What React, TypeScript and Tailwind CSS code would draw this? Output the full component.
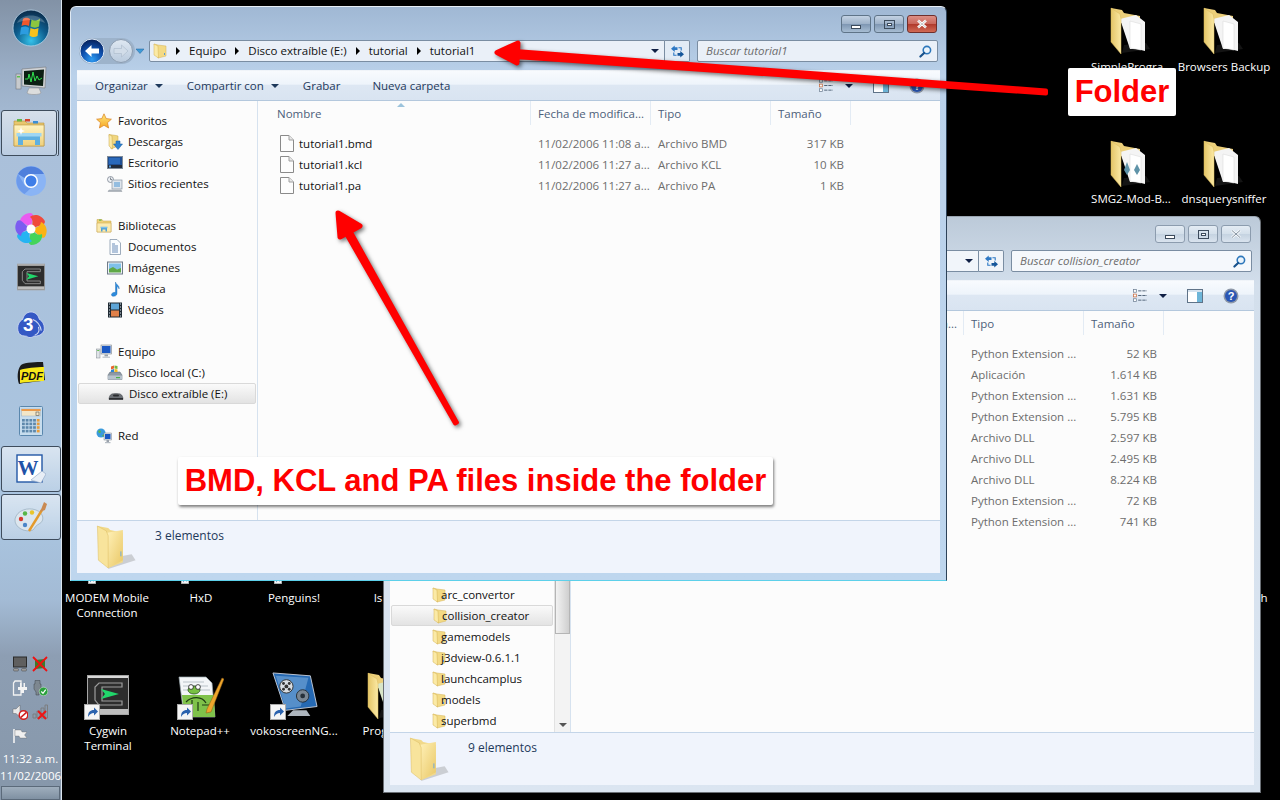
import React from "react";

type IconProps = { className?: string };

/* ---------- folders ---------- */
function BigFolder({ sheet = "#f4f4f4", detail = false, className = "" }: { sheet?: string; detail?: boolean; className?: string }) {
  return (
    <svg viewBox="0 0 40 48" className={className}>
      <defs>
        <linearGradient id="flap" x1="0" y1="0" x2="1" y2="0">
          <stop offset="0" stopColor="#e4c567" />
          <stop offset="1" stopColor="#fbe9a4" />
        </linearGradient>
      </defs>
      <path d="M12 46 L40 42 L36 36 L14 38 Z" fill="#3a3a3a" opacity="0.35" />
      <path d="M1 1 L12 3 L14 6 L30 9 L30 16 L1 16 Z" fill="#eccf7a" />
      <path d="M10 12 L26 8 L35 15 L35 44 L27 42 L20 42 Z" fill={sheet} />
      <path d="M20 14 L31 17 L31 43 L20 41 Z" fill={sheet === "#f4f4f4" ? "#ffffff" : sheet} stroke="#d7d7d7" strokeWidth="0.5" />
      {detail && (
        <g>
          <path d="M14 30 l3 -8 l3 8 l-3 5 Z" fill="#5f93a8" />
          <path d="M24 30 l3 -6 l3 6 l-3 5 Z" fill="#5f93a8" />
        </g>
      )}
      <path d="M1 1 L10 7 L11 12 L11 47 L1 35 Z" fill="url(#flap)" stroke="#d8b858" strokeWidth="0.5" />
    </svg>
  );
}

function PlainFolder({ className = "" }: IconProps) {
  return (
    <svg viewBox="0 0 40 46" className={className}>
      <defs>
        <linearGradient id="pf" x1="0" y1="0" x2="1" y2="1">
          <stop offset="0" stopColor="#fff1b8" />
          <stop offset="1" stopColor="#e9c765" />
        </linearGradient>
      </defs>
      <path d="M12 45 L40 36 L36 30 L14 34 Z" fill="#888" opacity="0.35" />
      <path d="M1 1 L12 3 L14 5 L27 8 L27 38 L12 44 Z" fill="#f1d98a" />
      <path d="M11 8 L27 5 L27 36 L12 44 Z" fill="url(#pf)" />
      <path d="M1 1 L10 6 L12 11 L12 44 L2 36 Z" fill="#f8e49c" stroke="#dcbc5f" strokeWidth="0.5" />
      <path d="M25 27 v5" stroke="#6ea8d8" strokeWidth="1" />
    </svg>
  );
}

function SmallFolder({ className = "" }: IconProps) {
  return (
    <svg viewBox="0 0 14 16" className={className}>
      <path d="M1 1 L5 2 L13 3 L13 13 L5 15 Z" fill="#f3da85" stroke="#d5b354" strokeWidth="0.5" />
      <path d="M1 1 L5 3 L5.5 15 L1 12 Z" fill="#fbeaa6" stroke="#d5b354" strokeWidth="0.5" />
      <path d="M11.5 10 v2" stroke="#5b9bd5" strokeWidth="1" />
    </svg>
  );
}

/* ---------- navigation pane icons ---------- */
function Star({ className = "" }: IconProps) {
  return (
    <svg viewBox="0 0 16 16" className={className}>
      <defs>
        <linearGradient id="st" x1="0" y1="0" x2="0" y2="1">
          <stop offset="0" stopColor="#ffe97f" />
          <stop offset="1" stopColor="#f6a623" />
        </linearGradient>
      </defs>
      <path d="M8 0.8 L10.2 5.6 L15.4 6.2 L11.5 9.7 L12.6 15 L8 12.3 L3.4 15 L4.5 9.7 L0.6 6.2 L5.8 5.6 Z" fill="url(#st)" stroke="#d97f20" strokeWidth="0.7" />
    </svg>
  );
}
function Downloads({ className = "" }: IconProps) {
  return (
    <svg viewBox="0 0 16 16" className={className}>
      <path d="M2 0.5 L9 1.5 L11 2 L11 12 L4 15 Z" fill="#f0d67f" stroke="#c9a648" strokeWidth="0.5" />
      <path d="M2 0.5 L5 2 L5.5 15 L2 12 Z" fill="#fbeaa6" stroke="#c9a648" strokeWidth="0.5" />
      <path d="M9 7 h4 v3 h2.5 L11 15.5 L6.5 10 H9 Z" fill="#2f82d0" stroke="#175a9d" strokeWidth="0.5" />
    </svg>
  );
}
function Desk({ className = "" }: IconProps) {
  return (
    <svg viewBox="0 0 16 16" className={className}>
      <rect x="0.5" y="1.5" width="15" height="12" fill="#1f4f94" stroke="#7f8b99" />
      <rect x="1" y="10" width="14" height="3" fill="#222c3c" />
      <rect x="2" y="3" width="11" height="6" fill="#2a69bb" />
      <rect x="2" y="10.5" width="2" height="2" fill="#5aa0e0" />
    </svg>
  );
}
function Recent({ className = "" }: IconProps) {
  return (
    <svg viewBox="0 0 16 16" className={className}>
      <circle cx="3.5" cy="3.5" r="3" fill="#eef1f5" stroke="#6d7785" strokeWidth="0.7" />
      <path d="M3.5 1.5 v2 h1.5" stroke="#3d4652" strokeWidth="0.6" fill="none" />
      <rect x="5" y="4" width="10" height="9" fill="#dfe5ec" stroke="#8b96a3" strokeWidth="0.7" />
      <rect x="7" y="6" width="6" height="5" fill="#94bde0" />
      <path d="M2 14 h12 l1 1.5 H1 Z" fill="#b5bbc3" stroke="#7b838e" strokeWidth="0.4" />
    </svg>
  );
}
function Library({ className = "" }: IconProps) {
  return (
    <svg viewBox="0 0 16 16" className={className}>
      <path d="M1 3 L1 1.5 H6 L7 3 H15 V14 H1 Z" fill="#efd27a" stroke="#c5a347" strokeWidth="0.5" />
      <path d="M1 5 H15 V14 H1 Z" fill="#fbeab0" stroke="#c5a347" strokeWidth="0.5" />
      <rect x="3" y="1.5" width="2.5" height="1.2" fill="#68b446" />
      <path d="M5 13.5 V10 H11 V13.5 H9.5 V11.5 H6.5 V13.5 Z" fill="#4f9fd6" />
      <rect x="4.5" y="8.7" width="7" height="1.5" fill="#7cc0e9" />
    </svg>
  );
}
function Doc({ className = "" }: IconProps) {
  return (
    <svg viewBox="0 0 16 16" className={className}>
      <path d="M3 0.5 H10 L13.5 4 V15.5 H3 Z" fill="#fbfdff" stroke="#8597ab" strokeWidth="0.8" />
      <path d="M5 5 H8 M5 7 H11 M5 9 H11 M5 11 H11 M5 13 H11" stroke="#5a7fb0" strokeWidth="0.9" />
    </svg>
  );
}
function Pics({ className = "" }: IconProps) {
  return (
    <svg viewBox="0 0 16 16" className={className}>
      <rect x="0.5" y="2" width="15" height="12" fill="#eef2f6" stroke="#6e7a88" />
      <rect x="2" y="3.5" width="12" height="6" fill="#7fc0ea" />
      <path d="M2 12.5 V9 L6 7 L10 9.5 L14 8 V12.5 Z" fill="#5fa847" />
    </svg>
  );
}
function Music({ className = "" }: IconProps) {
  return (
    <svg viewBox="0 0 16 16" className={className}>
      <path d="M8.5 1 C9 4 13 4.5 12 8 C12 6.5 10.5 5.8 10 5.6 L10 12.5 C10 14.5 7.6 15.7 5.7 15.2 C4 14.7 4.1 12.8 5.6 11.9 C6.6 11.3 7.8 11.2 8.5 11.5 Z" fill="#2d8bdd" stroke="#1a66ad" strokeWidth="0.4" />
    </svg>
  );
}
function Film({ className = "" }: IconProps) {
  return (
    <svg viewBox="0 0 16 16" className={className}>
      <rect x="1" y="0.5" width="14" height="15" fill="#1f2a33" />
      <rect x="4" y="1.5" width="8" height="6" fill="#5ea5d6" />
      <rect x="4" y="8.5" width="8" height="6" fill="#e1814a" />
      <path d="M2 2 H3 M2 5 H3 M2 8 H3 M2 11 H3 M2 14 H3 M13 2 H14 M13 5 H14 M13 8 H14 M13 11 H14 M13 14 H14" stroke="#d7e4ee" strokeWidth="1.2" />
    </svg>
  );
}
function Computer({ className = "" }: IconProps) {
  return (
    <svg viewBox="0 0 16 16" className={className}>
      <rect x="0.5" y="5" width="3.5" height="9" fill="#dfe3e7" stroke="#7f8790" strokeWidth="0.5" />
      <rect x="1.2" y="6" width="2" height="1" fill="#5cc04e" />
      <rect x="5" y="1" width="10.5" height="9" fill="#dde2e7" stroke="#7a828c" strokeWidth="0.6" />
      <rect x="6" y="2" width="8.5" height="7" fill="#1a58c4" />
      <rect x="8.5" y="10.5" width="3.5" height="2" fill="#9aa2ac" />
      <rect x="6.5" y="12.5" width="7.5" height="1.5" fill="#c6ccd2" />
    </svg>
  );
}
function DiskC({ className = "" }: IconProps) {
  return (
    <svg viewBox="0 0 16 16" className={className}>
      <path d="M1 10 L3 7 H13 L15 10 V14.5 H1 Z" fill="#8d99a5" stroke="#5a6570" strokeWidth="0.5" />
      <rect x="1" y="10.5" width="14" height="4" fill="#b7c2cc" />
      <rect x="9" y="12" width="4" height="1.2" fill="#4db24b" />
      <path d="M4 1.5 l3 -1 v3 l-3 1 Z" fill="#e9642f" />
      <path d="M7.5 0.5 l3 .5 v3 l-3 -.5 Z" fill="#76b83f" />
      <path d="M4 5 l3 -1 v3 h-3 Z" fill="#2c86d4" />
      <path d="M7.5 4 l3 .5 v2.5 h-3 Z" fill="#f3b81f" />
    </svg>
  );
}
function DiskE({ className = "" }: IconProps) {
  return (
    <svg viewBox="0 0 16 16" className={className}>
      <path d="M1 12 C2 8 4 7.5 8 7.5 C12 7.5 14 8 15 12 V13.5 H1 Z" fill="#6b6f74" stroke="#35383c" strokeWidth="0.4" />
      <rect x="5" y="8.5" width="6" height="2" rx="1" fill="#2a2c2f" />
      <rect x="1" y="12" width="14" height="1.6" fill="#2c2e31" />
    </svg>
  );
}
function Net({ className = "" }: IconProps) {
  return (
    <svg viewBox="0 0 16 16" className={className}>
      <circle cx="5" cy="5" r="4.5" fill="#3a9bdc" />
      <path d="M2 3 C4 1 5 3 5 4 C4 6 2.5 5 2 3 Z M6 8 C7 6 8 7 8.5 6.5 C8 8.5 7 9 6 8 Z" fill="#5db64a" />
      <rect x="8" y="5" width="7.5" height="7" fill="#dde2e7" stroke="#7a828c" strokeWidth="0.5" />
      <rect x="9" y="6" width="5.5" height="5" fill="#1a58c4" />
      <rect x="10.5" y="12" width="2.5" height="2" fill="#9aa2ac" />
      <rect x="9" y="14" width="5.5" height="1.2" fill="#b5bcc4" />
    </svg>
  );
}
function FileIcon({ className = "" }: IconProps) {
  return (
    <svg viewBox="0 0 14 17" className={className}>
      <path d="M0.5 0.5 H9 L13.5 5 V16.5 H0.5 Z" fill="#fdfdfd" stroke="#8a8a8a" />
      <path d="M9 0.5 V5 H13.5" fill="#e8e8e8" stroke="#a0a0a0" />
    </svg>
  );
}

/* ---------- window chrome icons ---------- */
function Magnifier({ className = "" }: IconProps) {
  return (
    <svg viewBox="0 0 14 14" className={className}>
      <circle cx="8.5" cy="5.5" r="4" fill="#eaf3fb" stroke="#2d77bb" strokeWidth="1.7" />
      <path d="M5.5 8.5 L1.5 12.5" stroke="#18528c" strokeWidth="2.3" strokeLinecap="round" />
    </svg>
  );
}
function Refresh({ className = "" }: IconProps) {
  return (
    <svg viewBox="0 0 16 14" className={className}>
      <path d="M1 4 L5 0.5 V2.5 H8 V5.5 H5 V7.5 Z" fill="#2d78c4" />
      <path d="M15 10 L11 13.5 V11.5 H8 V8.5 H11 V6.5 Z" fill="#15569a" />
      <path d="M9 3 L12 3 L12 6" stroke="#2d78c4" strokeWidth="1.2" fill="none" />
      <path d="M7 11 L4 11 L4 8" stroke="#2d78c4" strokeWidth="1.2" fill="none" />
    </svg>
  );
}
function ViewIcon({ className = "" }: IconProps) {
  return (
    <svg viewBox="0 0 16 14" className={className}>
      <rect x="0.5" y="0.5" width="3" height="3" fill="#fff" stroke="#6d7f93" strokeWidth="0.8" />
      <rect x="0.5" y="5.5" width="3" height="3" fill="#fff" stroke="#c96b3d" strokeWidth="0.8" />
      <rect x="0.5" y="10.5" width="3" height="3" fill="#fff" stroke="#6d7f93" strokeWidth="0.8" />
      <path d="M5.5 2 H15 M5.5 7 H15 M5.5 12 H15" stroke="#4b5d73" strokeWidth="1" strokeDasharray="3.5 1" />
    </svg>
  );
}
function PaneIcon({ className = "" }: IconProps) {
  return (
    <svg viewBox="0 0 16 14" className={className}>
      <rect x="0.5" y="0.5" width="15" height="13" fill="#fff" stroke="#5f7388" />
      <rect x="10" y="1" width="5" height="12" fill="#6db5d8" />
      <rect x="1" y="1" width="14" height="2" fill="#d6e3ef" />
    </svg>
  );
}
function HelpIcon({ className = "" }: IconProps) {
  return (
    <svg viewBox="0 0 16 16" className={className}>
      <circle cx="8" cy="8" r="7.5" fill="#8e98a8" />
      <circle cx="8" cy="8" r="6" fill="#2a56b4" />
      <text x="8" y="12" textAnchor="middle" fontSize="11" fontWeight="700" fill="#fff" fontFamily="Liberation Sans">?</text>
    </svg>
  );
}
function NavButtons() {
  return (
    <svg viewBox="0 0 71 30" className="w-[71px] h-[30px] shrink-0">
      <defs>
        <radialGradient id="bk" cx="0.5" cy="0.85" r="0.8">
          <stop offset="0" stopColor="#2f9cf2" />
          <stop offset="0.55" stopColor="#0d4fae" />
          <stop offset="1" stopColor="#07235f" />
        </radialGradient>
        <linearGradient id="fw" x1="0" y1="0" x2="0" y2="1">
          <stop offset="0" stopColor="#dfe8f2" />
          <stop offset="1" stopColor="#b9cadd" />
        </linearGradient>
      </defs>
      <rect x="2" y="2" width="56" height="26" rx="13" fill="#9db3cb" />
      <circle cx="15" cy="15" r="12" fill="url(#bk)" stroke="#dbe7f4" strokeWidth="1" />
      <path d="M8 15 L14.5 9 V12.5 H22 V17.5 H14.5 V21 Z" fill="#fff" />
      <circle cx="44" cy="15" r="11.5" fill="url(#fw)" stroke="#8b9cb0" strokeWidth="1" />
      <path d="M51 15 L44.5 9 V12.5 H37 V17.5 H44.5 V21 Z" fill="#d2dde9" stroke="#a9b8c9" strokeWidth="0.6" />
      <path d="M59 13 H67 L63 17.5 Z" fill="#3d9bd8" stroke="#1f5f9b" strokeWidth="0.5" />
    </svg>
  );
}

function Tri({ className = "" }: IconProps) {
  return <span className={"w-0 h-0 border-y-[4px] border-y-transparent border-l-[4px] border-l-black " + className} />;
}
function Down({ className = "" }: IconProps) {
  return <span className={"w-0 h-0 border-x-[4px] border-x-transparent border-t-[4px] border-t-[#1e395b] " + className} />;
}

function Controls({ active }: { active: boolean }) {
  const base = "w-[30px] h-[18px] rounded-[3px] border flex items-center justify-center ";
  const plain = active
    ? "border-[#5f7488] bg-[linear-gradient(180deg,#c3d2e3_0%,#9db1c8_50%,#7f97b3_52%,#a7bdd3_100%)]"
    : "border-[#8c9cae] bg-[linear-gradient(180deg,#e4ecf4_0%,#d3dfea_50%,#c5d3e1_52%,#d9e3ee_100%)]";
  const close = active
    ? "border-[#6f2f2c] bg-[linear-gradient(180deg,#dd8f86_0%,#c9665a_50%,#b03a2c_52%,#d16a55_100%)]"
    : plain;
  return (
    <div className="flex gap-[3px]">
      <div className={base + plain}>
        <span className="w-[10px] h-[4px] mt-[5px] border border-[#3c4b5c] bg-white" />
      </div>
      <div className={base + plain}>
        <span className="w-[11px] h-[9px] border border-[#3c4b5c] bg-transparent flex items-center justify-center">
          <span className="w-[5px] h-[3px] border border-[#3c4b5c] bg-white" />
        </span>
      </div>
      <div className={base + close}>
        <svg viewBox="0 0 12 10" className="w-[12px] h-[10px]">
          <path d="M2 1.5 L10 8.5 M10 1.5 L2 8.5" stroke={active ? "#fff" : "#f4f7fa"} strokeWidth="2.6" />
          {!active && <path d="M2 1.5 L10 8.5 M10 1.5 L2 8.5" stroke="#6b7b8c" strokeWidth="0.8" />}
          {active && <path d="M2 1.5 L10 8.5 M10 1.5 L2 8.5" stroke="#7a7a7a" strokeWidth="0.4" />}
        </svg>
      </div>
    </div>
  );
}

/* ---------- explorer window ---------- */
type Col = { tipo: string; size: string; name?: string; date?: string };

function Explorer({
  active,
  pos,
  search,
  address,
  left,
  files,
  count,
}: {
  active: boolean;
  pos: string;
  search: string;
  address: React.ReactNode;
  left: React.ReactNode;
  files: Col[];
  count: string;
}) {
  return (
    <div
      className={
        "absolute flex flex-col rounded-t-[6px] border " +
        pos +
        (active
          ? " border-[#2d4258] border-t-[#e8eff7] border-l-[#dfe9f3] border-b-[#5dd0ea] bg-[linear-gradient(180deg,#a0b8d4_0%,#bad1ea_12%,#bed6ee_100%)]"
          : " border-[#6a6f75] border-t-[#9aa5b1] bg-[linear-gradient(180deg,#bccad9_0%,#d3dfec_12%,#dbe5f1_100%)]")
      }
    >
      <div className="h-[63px] flex flex-col pl-[7px] pr-[8px]">
        <div className="flex justify-end pt-[8px] pr-[1px] h-[33px]">
          <Controls active={active} />
        </div>
        <div className="flex items-center h-[22px]">
          <div className="-ml-[1px] w-[72px] flex"><NavButtons /></div>
          <div className={"flex-1 h-[22px] flex items-center rounded-[2px] border border-[#7a8da2] " + (active ? "bg-[#eaf0f8]" : "bg-[#f1f5fa]")}>
            <div className="flex-1 flex items-center">{address}</div>
            <Down className="mr-[4px] !border-t-[#0f1f44]" />
            <span className="w-[1px] h-[20px] bg-[#7a8da2] ml-[1px]" />
          </div>
          <div className={"w-[25px] h-[22px] -ml-[1px] flex items-center justify-center rounded-r-[2px] border border-l-0 border-[#7a8da2] " + (active ? "bg-[#e2ebf5]" : "bg-[#f0f4f9]")}>
            <Refresh className="w-[15px] h-[13px]" />
          </div>
          <div className={"ml-[7px] w-[241px] h-[22px] flex items-center rounded-[2px] border border-[#7a8da2] pl-[8px] pr-[5px] " + (active ? "bg-[#eaf0f8]" : "bg-[#f5f8fc]")}>
            <span className="flex-1 italic text-[#6d6d6d] text-[11.5px]">{search}</span>
            <Magnifier className="w-[13px] h-[13px]" />
          </div>
        </div>
      </div>

      <div className="flex-1 mx-[6px] mb-[7px] flex flex-col min-h-0">
        {/* toolbar */}
        <div className="h-[31px] shrink-0 flex items-center text-[#1e395b] border-b border-[#b4c8dd] border-t border-t-[#fff]/60 bg-[linear-gradient(180deg,#f8fbfe_0%,#eef4fb_45%,#dde7f3_50%,#d9e4f1_100%)] pr-[15px]">
          <span className="ml-[18px]">Organizar</span>
          <Down className="ml-[7px]" />
          <span className="ml-[24px]">Compartir con</span>
          <Down className="ml-[7px]" />
          <span className="ml-[24px]">Grabar</span>
          <span className="ml-[32px]">Nueva carpeta</span>
          <div className="ml-auto flex items-center">
            <ViewIcon className="w-[15px] h-[13px]" />
            <Down className="ml-[11px] !border-t-[#0f1f44]" />
            <PaneIcon className="ml-[20px] w-[16px] h-[14px]" />
            <HelpIcon className="ml-[20px] w-[16px] h-[16px]" />
          </div>
        </div>

        {/* body */}
        <div className="flex-1 flex min-h-0 bg-[#fcfcfc]">
          <div className="w-[181px] shrink-0 border-r border-[#d6e2ef] flex flex-col overflow-hidden">{left}</div>
          <div className="flex-1 flex flex-col min-w-0">
            <div className="relative h-[24px] flex text-[#4c607a] shrink-0 pl-[1px]">
              {active && <span className="absolute left-[139px] top-[2px] w-0 h-0 border-x-[4px] border-x-transparent border-b-[4px] border-b-[#9cc3dc]" />}
              <HeaderCell w="w-[272px]" pl="pl-[18px]">Nombre</HeaderCell>
              <HeaderCell w="w-[120px]" pl="pl-[7px]">Fecha de modifica...</HeaderCell>
              <HeaderCell w="w-[120px]" pl="pl-[7px]">Tipo</HeaderCell>
              <HeaderCell w="w-[80px]" pl="pl-[7px]">Tamaño</HeaderCell>
            </div>
            <div className="pt-[8px] flex flex-col pl-[1px]">
              {files.map((f, i) => (
                <div key={i} className="h-[21px] flex items-center">
                  <div className="w-[272px] flex items-center pl-[21px]">
                    {f.name && <FileIcon className="w-[14px] h-[17px]" />}
                    <span className="ml-[5px] text-[#111]">{f.name}</span>
                  </div>
                  <div className="w-[120px] pl-[7px] text-[#6d6d6d] whitespace-nowrap">{f.date}</div>
                  <div className="w-[120px] pl-[7px] text-[#6d6d6d] whitespace-nowrap">{f.tipo}</div>
                  <div className="w-[73px] text-right text-[#6d6d6d]">{f.size}</div>
                </div>
              ))}
            </div>
          </div>
        </div>

        {/* status */}
        <div className="h-[53px] shrink-0 border-t border-[#c4d5e8] bg-[#f0f4fc] flex text-[#1e395b]">
          <PlainFolder className="ml-[19px] mt-[4px] w-[40px] h-[45px]" />
          <span className="ml-[19px] mt-[6px] text-[12px]">{count}</span>
        </div>
      </div>
    </div>
  );
}

function HeaderCell({ w, pl, children }: { w: string; pl: string; children: React.ReactNode }) {
  return (
    <div className={w + " " + pl + " h-full flex items-center border-r border-[#e3ebf4] whitespace-nowrap"}>
      <span className="mt-[1px]">{children}</span>
    </div>
  );
}

function NavRow({ icon, label, top, sel, gapTop = "" }: { icon: React.ReactNode; label: string; top?: boolean; sel?: boolean; gapTop?: string }) {
  return (
    <div
      className={
        "h-[21px] flex items-center text-[#111] whitespace-nowrap " +
        gapTop +
        (sel ? " mx-[1px] rounded-[2px] border border-[#d9d9d9] bg-[linear-gradient(180deg,#fafafa_0%,#e3e3e3_100%)]" : "")
      }
    >
      <span className={top ? "ml-[19px] w-[22px]" : sel ? "ml-[29px] w-[21px]" : "ml-[30px] w-[21px]"}>{icon}</span>
      <span>{label}</span>
    </div>
  );
}

const I16 = "w-[16px] h-[16px] block";

function MainNav() {
  return (
    <div className="pt-[9px] flex flex-col">
      <NavRow top icon={<Star className={I16} />} label="Favoritos" />
      <NavRow icon={<Downloads className={I16} />} label="Descargas" />
      <NavRow icon={<Desk className={I16} />} label="Escritorio" />
      <NavRow icon={<Recent className={I16} />} label="Sitios recientes" />
      <NavRow top gapTop="mt-[21px]" icon={<Library className={I16} />} label="Bibliotecas" />
      <NavRow icon={<Doc className={I16} />} label="Documentos" />
      <NavRow icon={<Pics className={I16} />} label="Imágenes" />
      <NavRow icon={<Music className={I16} />} label="Música" />
      <NavRow icon={<Film className={I16} />} label="Vídeos" />
      <NavRow top gapTop="mt-[21px]" icon={<Computer className={I16} />} label="Equipo" />
      <NavRow icon={<DiskC className={I16} />} label="Disco local (C:)" />
      <NavRow sel icon={<DiskE className={I16} />} label="Disco extraíble (E:)" />
      <NavRow top gapTop="mt-[21px]" icon={<Net className={I16} />} label="Red" />
    </div>
  );
}

function BackNav() {
  const items = ["arc_convertor", "collision_creator", "gamemodels", "j3dview-0.6.1.1", "launchcamplus", "models", "superbmd"];
  return (
    <div className="flex-1 flex justify-end min-h-0">
      <div className="flex-1 flex flex-col justify-end pb-[1px] overflow-hidden">
        {items.map((t) => (
          <NavRow key={t} sel={t === "collision_creator"} icon={<SmallFolder className="ml-[12px] w-[14px] h-[16px] block" />} label={t} />
        ))}
      </div>
      <div className="w-[16px] flex flex-col justify-end bg-[#f3f3f3] border-l border-[#e2e2e2]">
        <div className="flex-1" />
        <div className="h-[56px] bg-[linear-gradient(90deg,#f2f2f2,#cfcfcf)] border border-[#b5b5b5] mb-[84px]" />
        <div className="h-[14px] flex items-center justify-center">
          <span className="w-0 h-0 border-x-[4px] border-x-transparent border-t-[4px] border-t-[#555]" />
        </div>
      </div>
    </div>
  );
}

/* ---------- taskbar icons ---------- */
function Orb() {
  return (
    <svg viewBox="0 0 38 38" className="w-[38px] h-[38px]">
      <defs>
        <radialGradient id="orb" cx="0.5" cy="0.85" r="0.8">
          <stop offset="0" stopColor="#35c2ea" />
          <stop offset="0.55" stopColor="#0d5d8e" />
          <stop offset="1" stopColor="#0b2f4f" />
        </radialGradient>
      </defs>
      <circle cx="19" cy="19" r="18" fill="url(#orb)" stroke="#b9d4e8" strokeWidth="0.8" />
      <path d="M11 10 C14 8 16 9 18 10 L17 17 C15 16 12 15.5 9.5 17 Z" fill="#f0572d" />
      <path d="M19.5 10.5 C22 12 25 12 28 9.5 L27 17.5 C24.5 19 21.5 19 18.5 17.5 Z" fill="#8cc63f" />
      <path d="M9 18.5 C12 17 15 17.5 17 19 L16 26 C14 24.5 11 24.5 8 26 Z" fill="#2c9ce0" />
      <path d="M18.5 19 C21 20.5 24 20.5 26.5 19 L25.5 27 C23 28.5 20 28.5 17.5 26.5 Z" fill="#f8c21c" />
      <path d="M5 14 C9 4 29 4 33 14 C25 10 13 10 5 14 Z" fill="#fff" opacity="0.22" />
    </svg>
  );
}
function Monitor() {
  return (
    <svg viewBox="0 0 32 30" className="w-[32px] h-[30px]">
      <rect x="1" y="8" width="5" height="15" fill="#c7cacd" stroke="#66696d" strokeWidth="0.5" />
      <rect x="2" y="10" width="3" height="1.5" fill="#5cc04e" />
      <path d="M7 3 L31 1 L30 22 L7 20 Z" fill="#cfd2d5" stroke="#77797c" strokeWidth="0.6" />
      <path d="M9 5 L29 3.5 L28 20 L9 18.5 Z" fill="#0c1f14" />
      <path d="M10 13 L13 13 L14 8 L16 16 L18 6 L20 15 L22 10 L24 14 L27 12" stroke="#2fe04e" strokeWidth="1" fill="none" />
      <path d="M14 22 H24 L26 27 C24 29 14 29 12 27 Z" fill="#dcdddd" stroke="#8a8b8c" strokeWidth="0.5" />
    </svg>
  );
}
function ExplorerIcon() {
  return (
    <svg viewBox="0 0 32 30" className="w-[32px] h-[30px]">
      <defs>
        <linearGradient id="ex" x1="0" y1="0" x2="0" y2="1">
          <stop offset="0" stopColor="#fff3c0" />
          <stop offset="1" stopColor="#efd07c" />
        </linearGradient>
      </defs>
      <path d="M1 3 H12 L14 5 H31 V28 H1 Z" fill="#e8c76e" stroke="#b9963d" strokeWidth="0.6" />
      <rect x="4" y="1" width="5" height="2.5" fill="#62b64a" />
      <rect x="12" y="1" width="5" height="2.5" fill="#d6452d" />
      <rect x="20" y="3" width="5" height="2.5" fill="#3b8fd6" />
      <path d="M1 7 H31 V28 H1 Z" fill="url(#ex)" stroke="#b9963d" strokeWidth="0.6" />
      <path d="M5 27 V18 H27 V27 H22 V22 H10 V27 Z" fill="#5fb0e0" />
      <rect x="3.5" y="15" width="25" height="3.5" fill="#9fd6f2" />
      <path d="M8 9 l1 3 l3 1 l-3 1 l-1 3 l-1 -3 l-3 -1 l3 -1 Z" fill="#fff" />
    </svg>
  );
}
function Chromium() {
  return (
    <svg viewBox="0 0 30 30" className="w-[30px] h-[30px]">
      <circle cx="15" cy="15" r="15" fill="#8ab4f5" />
      <path d="M2 8 A15 15 0 0 1 28 8 H15 A7 7 0 0 0 8.5 12 Z" fill="#4f7fdc" />
      <path d="M2 8 L8.5 19 A7 7 0 0 0 15 22 L8.5 28 A15 15 0 0 1 2 8 Z" fill="#6c9aeb" />
      <circle cx="15" cy="15" r="7" fill="#fff" />
      <circle cx="15" cy="15" r="5.5" fill="#3f7ee8" />
    </svg>
  );
}
function Pinwheel() {
  const petals = ["#e95bf0", "#f04a3d", "#fbb314", "#44d45a", "#26b4f2", "#7c5cf0"];
  return (
    <svg viewBox="0 0 32 32" className="w-[32px] h-[32px]">
      {petals.map((c, i) => (
        <path key={c} d="M16 16 C16 8 21 2 16 0 C8 0 4 6 5 11 C8 9 12 11 16 16 Z" fill={c} transform={"rotate(" + i * 60 + " 16 16)"} />
      ))}
      <circle cx="16" cy="16" r="4.5" fill="#fff" />
    </svg>
  );
}
function Cygwin({ className = "w-[28px] h-[28px]" }: IconProps) {
  return (
    <svg viewBox="0 0 42 40" className={className}>
      <rect x="0.5" y="0.5" width="41" height="39" fill="#2d2d2d" stroke="#a6a6a6" />
      <rect x="1" y="1" width="40" height="2" fill="#d8d8d8" />
      <rect x="1" y="34" width="40" height="5" fill="#bdbdbd" />
      <path d="M35 8 H12 L8 12 V25 L12 30 H35 V26 H15 V12 H35 Z" fill="#2d2d2d" stroke="#9d9d9d" strokeWidth="1.2" />
      <path d="M14 14 L32 19 L14 24 L18 19 Z" fill="#21d66b" />
    </svg>
  );
}
function Three() {
  return (
    <svg viewBox="0 0 30 30" className="w-[30px] h-[28px]">
      <path d="M15 1 C20 1 23 5 24 9 C28 11 30 16 29 21 C27 26 22 27 18 27 C16 29 12 29 10 27 C6 27 2 26 1 21 C0 16 2 11 6 9 C7 5 10 1 15 1 Z" fill="#3458c4" stroke="#c9d4f0" strokeWidth="1" />
      <path d="M17 9 C22 11 25 15 26 21 M19 26 C24 24 24 20 23 17" stroke="#c9d4f0" strokeWidth="1.2" fill="none" />
      <text x="12" y="21" textAnchor="middle" fontSize="20" fontWeight="700" fill="#fff" fontFamily="Liberation Sans">3</text>
    </svg>
  );
}
function Pdf() {
  return (
    <svg viewBox="0 0 28 22" className="w-[28px] h-[22px]">
      <path d="M4 3 C8 0 20 0 26 0 L28 18 C22 20 10 20 2 22 C0 16 0 8 4 3 Z" fill="#1b1b1b" />
      <path d="M3 8 C8 6 20 5 27 5 L27 19 C20 19 10 20 3 21 Z" fill="#f7e81a" />
      <text x="15" y="18" textAnchor="middle" fontSize="11" fontWeight="700" fontStyle="italic" fill="#111" fontFamily="Liberation Sans">PDF</text>
    </svg>
  );
}
function Calc() {
  const cells = [];
  for (let r = 0; r < 4; r++) for (let c = 0; c < 5; c++) cells.push(<rect key={r + "-" + c} x={3 + c * 3.7} y={13 + r * 3.6} width="2.8" height="2.6" fill={c === 4 ? "#e89c3a" : "#5e88ab"} />);
  return (
    <svg viewBox="0 0 24 30" className="w-[24px] h-[30px]">
      <rect x="0.5" y="0.5" width="23" height="29" rx="1" fill="#c7ddee" stroke="#5a87ad" />
      <rect x="2.5" y="3" width="19" height="7" fill="#f2e6c8" stroke="#9bb1c4" strokeWidth="0.5" />
      <rect x="2.5" y="3" width="19" height="2" fill="#ec9a4a" />
      <rect x="17" y="6" width="3" height="3.5" fill="none" stroke="#555" strokeWidth="0.6" />
      {cells}
    </svg>
  );
}
function Word() {
  return (
    <svg viewBox="0 0 30 30" className="w-[30px] h-[30px]">
      <rect x="1" y="1" width="25" height="27" fill="#fff" stroke="#2357a6" strokeWidth="1.4" />
      <path d="M26 17 L30 20 L25 29 L15 26 Z" fill="#e8eef6" stroke="#8da4c4" strokeWidth="0.6" />
      <text x="12" y="21" textAnchor="middle" fontSize="21" fontWeight="700" fill="#1f53a8" fontFamily="Liberation Serif">W</text>
    </svg>
  );
}
function Palette() {
  return (
    <svg viewBox="0 0 34 32" className="w-[34px] h-[32px]">
      <path d="M1 18 C3 9 14 6 22 9 C30 12 31 20 25 23 C21 25 21 27 19 29 C12 32 0 27 1 18 Z" fill="#dce6ee" stroke="#8ba2b4" strokeWidth="0.6" />
      <circle cx="7" cy="18" r="2.2" fill="#d9382e" />
      <circle cx="11" cy="12.5" r="2.2" fill="#58b548" />
      <circle cx="18" cy="11.5" r="2.2" fill="#e8c52a" />
      <circle cx="11" cy="24" r="2.2" fill="#4a86c8" />
      <path d="M15 30 L28 9" stroke="#e39a2c" strokeWidth="2.4" />
      <path d="M26 11 L30 1 L33 3 L31 9 Z" fill="#c98a52" />
    </svg>
  );
}

function TrayPc() {
  return (
    <svg viewBox="0 0 16 16" className="w-[16px] h-[16px]">
      <rect x="1.5" y="1" width="13" height="10" fill="#5f5f5f" stroke="#2a2a2a" />
      <rect x="1.5" y="12.5" width="5" height="2.5" rx="1" fill="#9a9a9a" stroke="#444" strokeWidth="0.5" />
      <rect x="9.5" y="12.5" width="5" height="2.5" rx="1" fill="#9a9a9a" stroke="#444" strokeWidth="0.5" />
    </svg>
  );
}
function TrayX() {
  return (
    <svg viewBox="0 0 16 16" className="w-[16px] h-[16px]">
      <path d="M3 4 L13 3 L13 12 L3 13 Z" fill="#3d7a2b" />
      <path d="M1 1 L15 15 M15 1 L1 15" stroke="#f01010" strokeWidth="1.8" />
    </svg>
  );
}
function TrayPower() {
  return (
    <svg viewBox="0 0 16 16" className="w-[16px] h-[16px]">
      <path d="M3 1 H9 V15 H1.5 V3 Z" fill="none" stroke="#f2f2f2" strokeWidth="1.3" />
      <path d="M6 7 H15 V10 H12 V13 H9 V10 H6 Z M8 3 H9.5 V7 H8 Z M11.5 3 H13 V7 H11.5 Z" fill="#f4f4f4" />
    </svg>
  );
}
function TrayPlug() {
  return (
    <svg viewBox="0 0 16 16" className="w-[16px] h-[16px]">
      <path d="M3 0.5 H8 V4 H9 V9 L7 12 V15 H4 V12 L2 9 V4 H3 Z" fill="#7d8790" stroke="#3e454b" strokeWidth="0.5" />
      <circle cx="11.5" cy="11.5" r="4.3" fill="#2aa13c" stroke="#dfeedd" strokeWidth="0.5" />
      <path d="M9.3 11.5 L11 13.3 L13.7 9.6" stroke="#fff" strokeWidth="1.2" fill="none" />
    </svg>
  );
}
function TraySound() {
  return (
    <svg viewBox="0 0 16 16" className="w-[16px] h-[16px]">
      <path d="M1 5 H4 L8 1 V13 L4 9.5 H1 Z" fill="#e9e9e9" stroke="#555" strokeWidth="0.4" />
      <circle cx="11.5" cy="11" r="4.3" fill="#fff" stroke="#d21e1e" strokeWidth="1.5" />
      <path d="M8.6 13.6 L14.4 8.4" stroke="#d21e1e" strokeWidth="1.5" />
    </svg>
  );
}
function TraySignal() {
  return (
    <svg viewBox="0 0 16 16" className="w-[16px] h-[16px]">
      <path d="M1 10 h3 v4 H1 Z M5 7 h3 v7 H5 Z M9 4 h3 v10 H9 Z M13 1 h2.5 v13 H13 Z" fill="none" stroke="#7b7b7b" strokeWidth="0.9" />
      <path d="M6 7 L14 15 M14 7 L6 15" stroke="#ef1414" strokeWidth="2" />
    </svg>
  );
}
function TrayFlag() {
  return (
    <svg viewBox="0 0 16 16" className="w-[16px] h-[16px]">
      <path d="M2 1 V15" stroke="#f4f4f4" strokeWidth="1.6" />
      <path d="M3 2 H9 L10 4 H15 L12.5 7 L15 10 H8 L7 8 H3 Z" fill="#f0f0f0" stroke="#555" strokeWidth="0.3" />
    </svg>
  );
}

function Slot({ children, btn, cut }: { children: React.ReactNode; btn?: boolean; cut?: boolean }) {
  return (
    <div className="h-[48px] flex relative">
      <div
        className={
          "flex items-center justify-center h-[46px] my-auto " +
          (cut ? "w-[56px] ml-[1px] " : "w-[60px] ml-[1px] ") +
          (btn ? "rounded-[3px] border border-[#3e4c5c] bg-[linear-gradient(180deg,rgba(255,255,255,0.55),rgba(255,255,255,0.2))]" : "")
        }
      >
        {children}
      </div>
      {cut && <div className="w-[2px] h-[46px] my-auto rounded-r-[3px] border border-l-0 border-[#3e4c5c] bg-white/30" />}
    </div>
  );
}

/* ---------- desktop icons ---------- */
function Shortcut({ className = "" }: IconProps) {
  return (
    <svg viewBox="0 0 16 16" className={className}>
      <rect x="0.5" y="0.5" width="15" height="15" fill="#f5f5f5" stroke="#aaa" />
      <path d="M4 13 C4 8 6 6 10 6 V3.5 L14 7.5 L10 11.5 V9 C7 9 6 10 4 13 Z" fill="#2b62ad" />
    </svg>
  );
}
function DeskIcon({ pos, children }: { pos: string; children: React.ReactNode }) {
  return <div className={"absolute " + pos}>{children}</div>;
}
function Label({ pos, lines }: { pos: string; lines: string[] }) {
  return (
    <div className={"absolute -translate-x-1/2 text-white text-center leading-[15px] whitespace-nowrap " + pos}>
      {lines.map((l) => (
        <div key={l}>{l}</div>
      ))}
    </div>
  );
}
function Notepad({ className = "" }: IconProps) {
  return (
    <svg viewBox="0 0 46 44" className={className}>
      <path d="M1 2 H28 L34 8 L37 42 L6 42 Z" fill="#f3f6f8" stroke="#9aa6ad" strokeWidth="0.7" />
      <path d="M4 20 H36 L37 42 H6 Z" fill="#7fc24a" />
      <path d="M5 7 H26 M5 11 H30 M5 15 H32" stroke="#b9c2c8" strokeWidth="1" />
      <ellipse cx="16" cy="15" rx="6" ry="4" fill="#78c044" stroke="#26521a" strokeWidth="0.8" />
      <circle cx="13" cy="12" r="2.4" fill="#fff" stroke="#222" strokeWidth="0.8" />
      <circle cx="20" cy="12" r="2.4" fill="#fff" stroke="#222" strokeWidth="0.8" />
      <path d="M8 27 C14 21 24 21 28 28 M14 25 V38 M20 27 V36 M24 30 H32" stroke="#1f3c14" strokeWidth="1.2" fill="none" />
      <path d="M29 34 L44 3 L46 4 L33 37 L28 38 Z" fill="#eda52c" stroke="#8a5a15" strokeWidth="0.5" />
    </svg>
  );
}
function Voko({ className = "" }: IconProps) {
  return (
    <svg viewBox="0 0 48 48" className={className}>
      <path d="M1 1 L40 4 L47 36 L14 40 Z" fill="#2569b3" stroke="#c0c8d4" strokeWidth="1" />
      <path d="M4 4 L38 6 L30 36 L14 38 Z" fill="#78a8d8" opacity="0.6" />
      <circle cx="15" cy="15" r="7" fill="#d9dee4" stroke="#333" strokeWidth="1" />
      <circle cx="15" cy="15" r="2" fill="#333" />
      <circle cx="12" cy="12" r="1.5" fill="#333" />
      <circle cx="18" cy="12" r="1.5" fill="#333" />
      <circle cx="12" cy="18" r="1.5" fill="#333" />
      <circle cx="18" cy="18" r="1.5" fill="#333" />
      <circle cx="32" cy="25" r="6.5" fill="#7a8794" stroke="#26303a" strokeWidth="1" />
      <circle cx="32" cy="25" r="2.5" fill="#26303a" />
      <path d="M22 40 H36 L40 46 H16 Z" fill="#aeb6be" />
    </svg>
  );
}

export default function App() {
  return (
    <div className="relative w-[1280px] h-[800px] overflow-hidden bg-black flex text-[11.5px] font-['Open_Sans',sans-serif]">
      {/* taskbar */}
      <div className="w-[62px] h-full shrink-0 flex flex-col border-r border-[#dbe5ee] bg-[linear-gradient(180deg,#8292a6_0%,#9aaec6_9%,#aac0da_18%,#aac5e0_65%,#a3bbd5_75%,#8d9eb3_82%,#8697aa_100%)]">
        <div className="h-[52px] pt-[9px] pl-[12px]"><Orb /></div>
        <div className="h-[9px]" />
        <div className="-mt-[4px] mb-[4px]"><Slot><Monitor /></Slot></div>
        <Slot btn cut><ExplorerIcon /></Slot>
        <Slot><Chromium /></Slot>
        <Slot><Pinwheel /></Slot>
        <Slot><Cygwin /></Slot>
        <Slot><Three /></Slot>
        <Slot><Pdf /></Slot>
        <Slot><Calc /></Slot>
        <Slot btn><Word /></Slot>
        <Slot btn><Palette /></Slot>
        <div className="mt-auto grid grid-cols-2 gap-y-[8px] pl-[12px] pr-[9px] justify-items-start">
          <TrayPc />
          <TrayX />
          <TrayPower />
          <TrayPlug />
          <TraySound />
          <TraySignal />
          <TrayFlag />
        </div>
        <div className="mt-[6px] text-center text-white text-[11.5px] leading-[17px] whitespace-nowrap">
          <div>11:32 a.m.</div>
          <div>11/02/2006</div>
        </div>
        <div className="mt-[2px] h-[14px] mx-[1px] border border-[#5b6a7a] bg-[linear-gradient(180deg,#9faebd,#7f90a2)]" />
      </div>

      {/* desktop */}
      <DeskIcon pos="left-[1110px] top-[7px]"><BigFolder className="w-[40px] h-[48px]" /></DeskIcon>
      <DeskIcon pos="left-[1203px] top-[7px]"><BigFolder className="w-[40px] h-[48px]" /></DeskIcon>
      <DeskIcon pos="left-[1110px] top-[140px]"><BigFolder detail className="w-[40px] h-[48px]" /></DeskIcon>
      <DeskIcon pos="left-[1203px] top-[140px]"><BigFolder className="w-[40px] h-[48px]" /></DeskIcon>
      <Label pos="left-[1127px] top-[59px]" lines={["SimpleProgra"]} />
      <Label pos="left-[1224px] top-[59px]" lines={["Browsers Backup"]} />
      <Label pos="left-[1131px] top-[191px]" lines={["SMG2-Mod-B..."]} />
      <Label pos="left-[1224px] top-[191px]" lines={["dnsquerysniffer"]} />
      <Label pos="left-[107px] top-[590px]" lines={["MODEM Mobile", "Connection"]} />
      <Label pos="left-[201px] top-[590px]" lines={["HxD"]} />
      <Label pos="left-[294px] top-[590px]" lines={["Penguins!"]} />
      <Label pos="left-[378px] top-[590px]" lines={["Is"]} />
      <Label pos="left-[1264px] top-[590px]" lines={["h"]} />
      <Label pos="left-[108px] top-[723px]" lines={["Cygwin", "Terminal"]} />
      <Label pos="left-[200px] top-[723px]" lines={["Notepad++"]} />
      <Label pos="left-[294px] top-[723px]" lines={["vokoscreenNG..."]} />
      <Label pos="left-[375px] top-[723px]" lines={["Prog"]} />
      <DeskIcon pos="left-[84px] top-[576px]"><Shortcut className="w-[16px] h-[8px] overflow-hidden" /></DeskIcon>
      <DeskIcon pos="left-[177px] top-[576px]"><Shortcut className="w-[16px] h-[8px] overflow-hidden" /></DeskIcon>
      <DeskIcon pos="left-[270px] top-[576px]"><Shortcut className="w-[16px] h-[8px] overflow-hidden" /></DeskIcon>
      <DeskIcon pos="left-[87px] top-[675px]"><Cygwin className="w-[42px] h-[40px]" /></DeskIcon>
      <DeskIcon pos="left-[84px] top-[704px]"><Shortcut className="w-[16px] h-[16px]" /></DeskIcon>
      <DeskIcon pos="left-[178px] top-[675px]"><Notepad className="w-[46px] h-[44px]" /></DeskIcon>
      <DeskIcon pos="left-[177px] top-[704px]"><Shortcut className="w-[16px] h-[16px]" /></DeskIcon>
      <DeskIcon pos="left-[272px] top-[672px]"><Voko className="w-[46px] h-[46px]" /></DeskIcon>
      <DeskIcon pos="left-[270px] top-[704px]"><Shortcut className="w-[16px] h-[16px]" /></DeskIcon>
      <DeskIcon pos="left-[367px] top-[672px]"><BigFolder sheet="#d9e6c8" className="w-[40px] h-[48px]" /></DeskIcon>

      {/* rear window */}
      <Explorer
        active={false}
        pos="left-[383px] top-[216px] w-[878px] h-[577px]"
        search="Buscar collision_creator"
        address={<span />}
        left={<BackNav />}
        files={[
          { tipo: "Python Extension ...", size: "52 KB" },
          { tipo: "Aplicación", size: "1.614 KB" },
          { tipo: "Python Extension ...", size: "1.631 KB" },
          { tipo: "Python Extension ...", size: "5.795 KB" },
          { tipo: "Archivo DLL", size: "2.597 KB" },
          { tipo: "Archivo DLL", size: "2.495 KB" },
          { tipo: "Archivo DLL", size: "8.224 KB" },
          { tipo: "Python Extension ...", size: "72 KB" },
          { tipo: "Python Extension ...", size: "741 KB" },
        ]}
        count="9 elementos"
      />

      {/* front window */}
      <Explorer
        active
        pos="left-[70px] top-[6px] w-[877px] h-[575px]"
        search="Buscar tutorial1"
        address={
          <div className="flex items-center text-[#111] whitespace-nowrap">
            <SmallFolder className="ml-[3px] w-[14px] h-[16px]" />
            <Tri className="ml-[9px]" />
            <span className="ml-[9px]">Equipo</span>
            <Tri className="ml-[9px]" />
            <span className="ml-[9px]">Disco extraíble (E:)</span>
            <Tri className="ml-[9px]" />
            <span className="ml-[9px]">tutorial</span>
            <Tri className="ml-[9px]" />
            <span className="ml-[9px]">tutorial1</span>
          </div>
        }
        left={<MainNav />}
        files={[
          { name: "tutorial1.bmd", date: "11/02/2006 11:08 a...", tipo: "Archivo BMD", size: "317 KB" },
          { name: "tutorial1.kcl", date: "11/02/2006 11:27 a...", tipo: "Archivo KCL", size: "10 KB" },
          { name: "tutorial1.pa", date: "11/02/2006 11:27 a...", tipo: "Archivo PA", size: "1 KB" },
        ]}
        count="3 elementos"
      />

      {/* annotations */}
      <svg viewBox="0 0 1280 800" className="absolute inset-0 w-[1280px] h-[800px] pointer-events-none drop-shadow-[2px_2px_2px_rgba(0,0,0,0.55)]">
        <g fill="#ff0000" stroke="#ff0000" strokeLinejoin="round">
          <path d="M515 51 L1046 90.5 L1046 93.5 L515 57 Z" strokeWidth="4" />
          <path d="M497 52.5 L518 43 L517 63 Z" strokeWidth="5" />
          <path d="M350.2 230.8 L456.9 422.5 L455.1 423.5 L345.8 233.2 Z" strokeWidth="4" />
          <path d="M338 213 L360 226 L340 237 Z" strokeWidth="5" />
        </g>
      </svg>
      <div className="absolute left-[1068px] top-[68px] w-[108px] h-[48px] flex items-center justify-center rounded-[2px] bg-white shadow-[1px_1px_3px_rgba(0,0,0,0.5)] text-[#ff0000] font-bold text-[31px] font-['Liberation_Sans',sans-serif]">
        Folder
      </div>
      <div className="absolute left-[178px] top-[457px] w-[595px] h-[48px] flex items-center justify-center rounded-[2px] bg-white shadow-[1px_2px_3px_rgba(0,0,0,0.5)] text-[#ff0000] font-bold text-[31px] whitespace-nowrap font-['Liberation_Sans',sans-serif]">
        BMD, KCL and PA files inside the folder
      </div>
    </div>
  );
}
